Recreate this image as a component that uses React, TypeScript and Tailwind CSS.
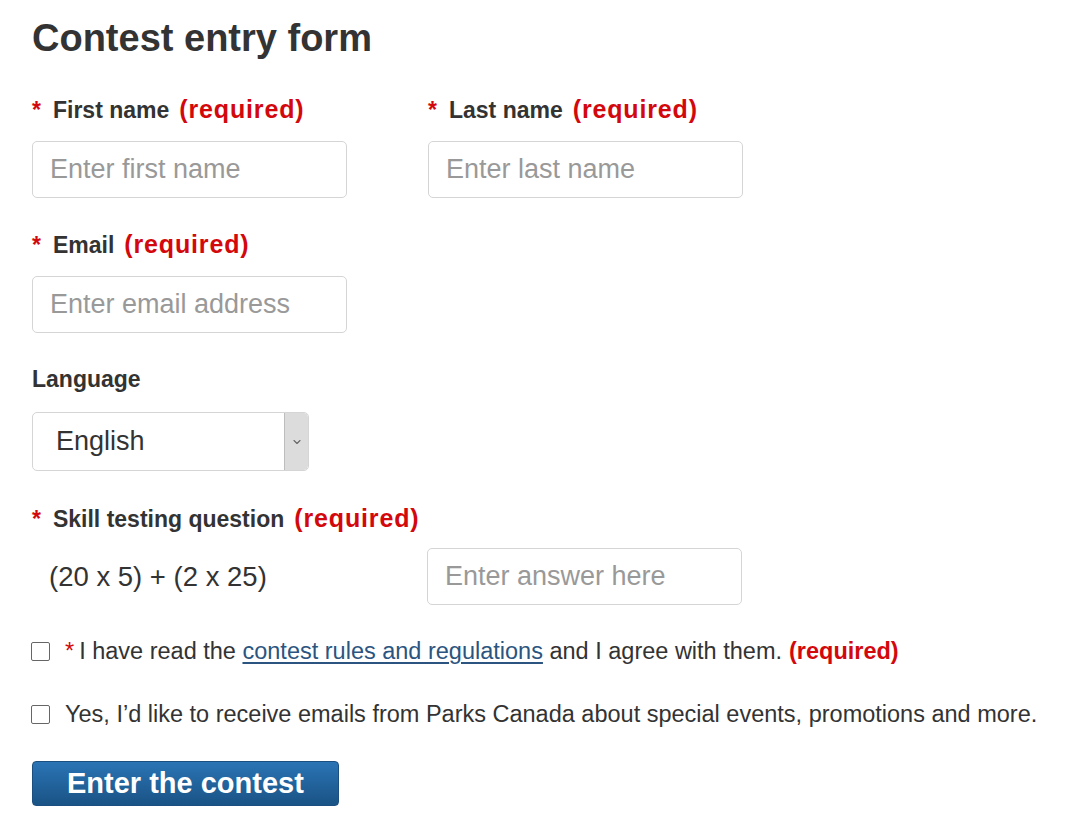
import { ChevronDown } from 'lucide-react';

function Req() {
  return <span className="text-[#d3080c] mr-[12px]">*</span>;
}

function Required({ big = true }: { big?: boolean }) {
  return (
    <strong
      className={
        big
          ? 'ml-[10px] text-[#d3080c] font-bold text-[25px] tracking-[0.85px]'
          : 'ml-[7px] text-[#d3080c] font-bold'
      }
    >
      (required)
    </strong>
  );
}

function FieldLabel({ text, required = true }: { text: string; required?: boolean }) {
  return (
    <label className="flex items-baseline h-[28px] leading-[28px] text-[23px] font-bold text-[#333] whitespace-nowrap">
      {required && <Req />}
      <span>{text}</span>
      {required && <Required />}
    </label>
  );
}

function TextInput({ placeholder }: { placeholder: string }) {
  return (
    <input
      type="text"
      placeholder={placeholder}
      className="block w-[315px] h-[57px] border border-[#d5d5d5] rounded-[5px] bg-white pl-[17px] text-[27px] text-[#333] placeholder:text-[#999] outline-none"
    />
  );
}

function Checkbox() {
  return (
    <input
      type="checkbox"
      className="appearance-none shrink-0 w-[19px] h-[19px] border border-[#666] rounded-[2px] bg-white ml-[-1px]"
    />
  );
}

export default function App() {
  return (
    <div className="min-h-screen bg-white px-8 pt-4 text-[#333] font-['Liberation_Sans',Arial,sans-serif]">
      <h1 className="text-[38px] leading-[44px] font-bold text-[#333]">Contest entry form</h1>

      {/* Name row */}
      <div className="mt-[35px] flex gap-[81px]">
        <div>
          <FieldLabel text="First name" />
          <div className="mt-[18px]">
            <TextInput placeholder="Enter first name" />
          </div>
        </div>
        <div>
          <FieldLabel text="Last name" />
          <div className="mt-[18px]">
            <TextInput placeholder="Enter last name" />
          </div>
        </div>
      </div>

      {/* Email */}
      <div className="mt-[32px]">
        <FieldLabel text="Email" />
        <div className="mt-[18px]">
          <TextInput placeholder="Enter email address" />
        </div>
      </div>

      {/* Language */}
      <div className="mt-[32px]">
        <FieldLabel text="Language" required={false} />
        <div className="mt-[19px] flex w-[277px] h-[59px] border border-[#d5d5d5] rounded-[5px] bg-white overflow-hidden">
          <span className="flex-1 flex items-center pl-[23px] text-[27px] text-[#333]">English</span>
          <span className="w-[24px] flex items-center justify-center bg-[#dcdcdc] border-l border-[#bdbdbd] rounded-r-[4px]">
            <ChevronDown className="w-[12px] h-[12px] text-[#666]" strokeWidth={2.25} />
          </span>
        </div>
      </div>

      {/* Skill testing question */}
      <div className="mt-[33px]">
        <FieldLabel text="Skill testing question" />
        <div className="mt-[16px] flex items-center">
          <span className="w-[395px] pl-[17px] text-[27.5px] text-[#333]">(20 x 5) + (2 x 25)</span>
          <TextInput placeholder="Enter answer here" />
        </div>
      </div>

      {/* Agreements */}
      <div className="mt-[32px] flex items-center h-[28px] text-[23.5px] leading-[28px]">
        <Checkbox />
        <span className="ml-[15px] whitespace-nowrap">
          <span className="text-[#d3080c] mr-[5px]">*</span>I have read the{' '}
          <a href="#" className="text-[#2b5580] underline underline-offset-[3px]">
            contest rules and regulations
          </a>{' '}
          and I agree with them.
          <Required big={false} />
        </span>
      </div>
      <div className="mt-[35px] flex items-center h-[28px] text-[23.5px] leading-[28px]">
        <Checkbox />
        <span className="ml-[15px] whitespace-nowrap">
          Yes, I’d like to receive emails from Parks Canada about special events, promotions and more.
        </span>
      </div>

      <button
        type="button"
        className="mt-[33px] h-[45px] px-[34px] rounded-[4px] border border-[#1a4f7f] bg-gradient-to-b from-[#2a74b5] to-[#1a5385] text-white text-[29px] font-bold leading-none"
      >
        Enter the contest
      </button>
    </div>
  );
}
